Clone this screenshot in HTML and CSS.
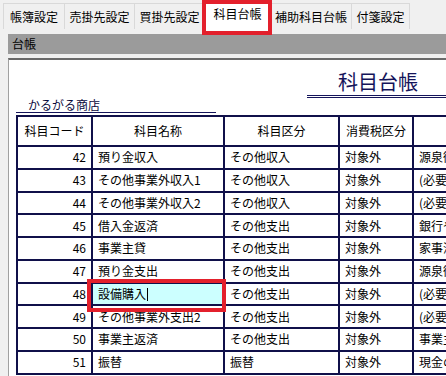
FILE: index.html
```html
<!DOCTYPE html>
<html lang="ja">
<head>
  <meta charset="UTF-8" />
  <title>科目台帳</title>
  <link rel="stylesheet" href="styles.css">
</head>
<body>
  <div class="tabs">
    <div class="tab tab-books">帳簿設定</div>
    <div class="tab tab-sales">売掛先設定</div>
    <div class="tab tab-buys">買掛先設定</div>
    <div class="tab tab-ledger active">科目台帳</div>
    <div class="tab tab-sub">補助科目台帳</div>
    <div class="tab tab-notes">付箋設定</div>
  </div>

  <div class="sheet-bar">台帳</div>

  <div class="sheet">
    <div class="report-title">科目台帳</div>
    <div class="shop-name">かるがる商店</div>

    <table class="ledger">
      <colgroup>
        <col class="c-code">
        <col class="c-name">
        <col class="c-kind">
        <col class="c-tax">
        <col class="c-memo">
      </colgroup>
      <thead>
        <tr><th>科目コード</th><th>科目名称</th><th>科目区分</th><th>消費税区分</th><th></th></tr>
      </thead>
      <tbody>
        <tr><td class="code">42</td><td>預り金収入</td><td>その他収入</td><td>対象外</td><td>源泉徴収税などの預り</td></tr>
        <tr><td class="code">43</td><td>その他事業外収入1</td><td>その他収入</td><td>対象外</td><td>(必要に応じて設定)</td></tr>
        <tr><td class="code">44</td><td>その他事業外収入2</td><td>その他収入</td><td>対象外</td><td>(必要に応じて設定)</td></tr>
        <tr><td class="code">45</td><td>借入金返済</td><td>その他支出</td><td>対象外</td><td>銀行や知人への返済</td></tr>
        <tr><td class="code">46</td><td>事業主貸</td><td>その他支出</td><td>対象外</td><td>家事消費など</td></tr>
        <tr><td class="code">47</td><td>預り金支出</td><td>その他支出</td><td>対象外</td><td>源泉徴収税などの納付</td></tr>
        <tr><td class="code">48</td><td class="editing">設備購入<span class="caret"></span></td><td>その他支出</td><td>対象外</td><td>(必要に応じて設定)</td></tr>
        <tr><td class="code">49</td><td>その他事業外支出2</td><td>その他支出</td><td>対象外</td><td>(必要に応じて設定)</td></tr>
        <tr><td class="code">50</td><td>事業主返済</td><td>その他支出</td><td>対象外</td><td>事業主への返済</td></tr>
        <tr><td class="code">51</td><td>振替</td><td>振替</td><td>対象外</td><td>現金の預け入れなど</td></tr>
      </tbody>
    </table>
  </div>

  <!-- 赤枠の注記 -->
  <div class="mark mark-tab"></div>
  <div class="mark mark-cell"></div>
</body>
</html>
```

FILE: styles.css
```css
body {
  margin: 0;
  width: 446px;
  height: 376px;
  overflow: hidden;
  position: relative;
  background-color: #f0f0f0;
  font-family: "Noto Sans CJK JP", sans-serif;
  font-size: 12px;
  color: #000;
}

.tabs {
  display: flex;
  align-items: flex-start;
  height: 26px;
  padding: 3px 0 0 3px;
}

.tab {
  box-sizing: border-box;
  height: 26px;
  padding-top: 2px;
  line-height: 22px;
  text-align: center;
  border: 1px solid #d9d9d9;
  border-bottom: none;
  border-right: none;
  background-color: #f0f0f0;
  white-space: nowrap;
}

.tab-books { width: 61px; }
.tab-sales { width: 70px; }
.tab-buys { width: 70px; }
.tab-ledger { width: 66px; }
.tab-sub { width: 81px; }
.tab-notes { width: 59px; border-right: 1px solid #d9d9d9; }

.tab.active {
  height: 30px;
  margin-top: -2px;
  padding-top: 1px;
  background-color: #fff;
  position: relative;
}

.sheet-bar {
  margin: 5px 0 0 8px;
  height: 20px;
  line-height: 20px;
  padding-left: 4px;
  background-color: #9b9b9b;
}

.sheet {
  margin: 4px 0 0 8px;
  height: 330px;
  overflow: hidden;
  background-color: #fff;
  border-top: 2px solid #6a6a6a;
  border-left: 1px solid #a0a0a0;
}

.report-title {
  margin: 10px 0 0 298px;
  padding: 0 0 1px 31px;
  font-size: 20px;
  line-height: 24px;
  color: #14145a;
  white-space: nowrap;
  border-bottom: 3px double #14145a;
}

.shop-name {
  width: 188px;
  margin-left: 7px;
  padding-left: 12px;
  line-height: 14px;
  color: #0a0a3c;
  border-bottom: 1px solid #14145a;
}

.ledger {
  margin: 2px 0 0 7px;
  border-collapse: collapse;
  table-layout: fixed;
  width: 596px;
}

.c-code { width: 75px; }
.c-name { width: 132px; }
.c-kind { width: 115px; }
.c-tax { width: 74px; }
.c-memo { width: 200px; }

.ledger th,
.ledger td {
  border: 2px solid #10104a;
  padding: 0 5px;
  line-height: 16px;
  white-space: nowrap;
  overflow: hidden;
}

.ledger th {
  height: 28px;
  font-weight: normal;
  text-align: center;
  padding: 0;
}

.ledger td {
  height: 20.75px;
  padding-left: 5px;
}

.ledger td.code {
  text-align: right;
  padding-right: 5px;
}

.ledger td.editing {
  background-color: #ccffff;
}

.caret {
  display: inline-block;
  width: 1px;
  height: 13px;
  margin-left: 1px;
  vertical-align: -2px;
  background-color: #000;
}

.mark {
  position: absolute;
  box-sizing: border-box;
  border: 4px solid #e3202c;
}

.mark-tab {
  left: 202px;
  top: 0;
  width: 70px;
  height: 35px;
}

.mark-cell {
  left: 87px;
  top: 279px;
  width: 139px;
  height: 33px;
}
```
